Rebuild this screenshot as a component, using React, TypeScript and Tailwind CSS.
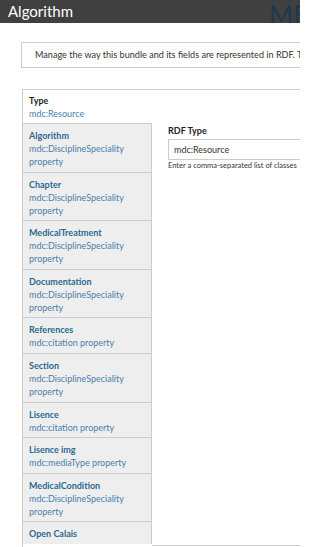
import React from "react";

// ─── Types ────────────────────────────────────────────────────────────────────

interface TabItem {
  title: string;
  lines: string[];
}

// ─── Data ─────────────────────────────────────────────────────────────────────

const tabs: TabItem[] = [
  { title: "Algorithm", lines: ["mdc:DisciplineSpeciality", "property"] },
  { title: "Chapter", lines: ["mdc:DisciplineSpeciality", "property"] },
  { title: "MedicalTreatment", lines: ["mdc:DisciplineSpeciality", "property"] },
  { title: "Documentation", lines: ["mdc:DisciplineSpeciality", "property"] },
  { title: "References", lines: ["mdc:citation property"] },
  { title: "Section", lines: ["mdc:DisciplineSpeciality", "property"] },
  { title: "Lisence", lines: ["mdc:citation property"] },
  { title: "Lisence img", lines: ["mdc:mediaType property"] },
  { title: "MedicalCondition", lines: ["mdc:DisciplineSpeciality", "property"] },
  { title: "Open Calais", lines: [] },
];

// ─── Tab row ──────────────────────────────────────────────────────────────────

function TabRow({ tab }: { tab: TabItem }) {
  return (
    <div className="bg-[#eeeeee] border-t border-r border-[#cccccc] pl-[6px] pt-[5px] pb-[3.6px] leading-[13px] text-[9px]">
      <div className="font-bold text-[#2a6a90]">{tab.title}</div>
      {tab.lines.map((l) => (
        <div key={l} className="text-[#4a80aa]">
          {l}
        </div>
      ))}
    </div>
  );
}

// ─── Page ─────────────────────────────────────────────────────────────────────

export default function App() {
  return (
    <div className="relative w-[300px] h-[547px] overflow-hidden bg-white font-['Lato',sans-serif] text-[#333333]">
      {/* header */}
      <div className="relative h-[23px] bg-[#404040] flex items-center pl-[8px] overflow-hidden">
        <span className="text-white text-[15px] leading-none">Algorithm</span>
        <span className="absolute left-[269px] top-[2px] text-[26px] leading-none text-[#1e3850]">
          ME
        </span>
      </div>

      <div className="pl-[21px] pt-[19px]">
        {/* description */}
        <div className="w-[279px] h-[26px] border-l border-y border-[#cccccc] pl-[13px] flex items-center whitespace-nowrap overflow-hidden text-[9.1px] text-[#333333]">
          Manage the way this bundle and its fields are represented in RDF. This
        </div>

        {/* main box */}
        <div className="mt-[21px] ml-[1px] w-[278px] border-l border-t border-[#cccccc] flex h-[470px]">
          <div className="w-[129px] flex flex-col">
            <div className="bg-white pl-[6px] pt-[4px] pb-[3px] leading-[13px] text-[9px]">
              <div className="font-bold text-[#222222]">Type</div>
              <div className="text-[#4a80aa]">mdc:Resource</div>
            </div>
            {tabs.map((t) => (
              <TabRow key={t.title} tab={t} />
            ))}
          </div>
          <div className="flex-1 min-w-0 border-b border-[#cccccc] mb-[13px] pl-[16px] pt-[35px]">
            <div className="text-[9px] font-bold text-[#222222] leading-[12px]">RDF Type</div>
            <div className="mt-[2px] h-[21px] border-l border-y border-[#cccccc] pl-[5px] flex items-center text-[9px] text-[#333333]">
              mdc:Resource
            </div>
            <div className="mt-[1px] text-[7.5px] leading-[10px] text-[#333333] whitespace-nowrap overflow-hidden">
              Enter a comma-separated list of classes
            </div>
          </div>
        </div>
      </div>
    </div>
  );
}
